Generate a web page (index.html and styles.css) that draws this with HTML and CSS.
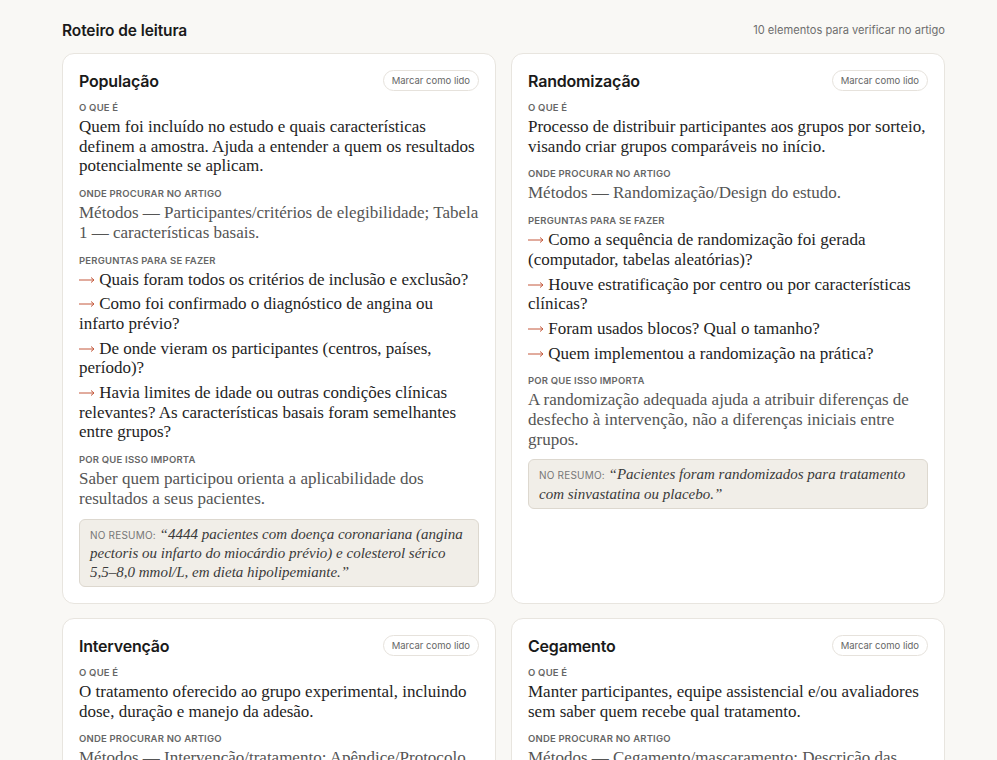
FILE: index.html
```html
<!DOCTYPE html>
<html lang="pt-BR">
<head>
  <meta charset="UTF-8">
  <title>Roteiro de leitura</title>
  <link rel="stylesheet" href="styles.css">
</head>
<body>
  <div class="page">
    <div class="page-header">
      <h2>Roteiro de leitura</h2>
      <span class="count">10 elementos para verificar no artigo</span>
    </div>

    <div class="cards">
      <div class="card">
        <div class="card-head">
          <h3>População</h3>
          <button class="mark-btn">Marcar como lido</button>
        </div>
        <div class="label">O que é</div>
        <p class="what">Quem foi incluído no estudo e quais características definem a amostra. Ajuda a entender a quem os resultados potencialmente se aplicam.</p>
        <div class="label">Onde procurar no artigo</div>
        <p class="where">Métodos — Participantes/critérios de elegibilidade; Tabela 1 — características basais.</p>
        <div class="label">Perguntas para se fazer</div>
        <ul class="questions">
          <li><svg class="arrow" width="16" height="8" viewBox="0 0 16 8"><path d="M0 4H15M12 1.5L15 4L12 6.5"/></svg> Quais foram todos os critérios de inclusão e exclusão?</li>
          <li><svg class="arrow" width="16" height="8" viewBox="0 0 16 8"><path d="M0 4H15M12 1.5L15 4L12 6.5"/></svg> Como foi confirmado o diagnóstico de angina ou infarto prévio?</li>
          <li><svg class="arrow" width="16" height="8" viewBox="0 0 16 8"><path d="M0 4H15M12 1.5L15 4L12 6.5"/></svg> De onde vieram os participantes (centros, países, período)?</li>
          <li><svg class="arrow" width="16" height="8" viewBox="0 0 16 8"><path d="M0 4H15M12 1.5L15 4L12 6.5"/></svg> Havia limites de idade ou outras condições clínicas relevantes? As características basais foram semelhantes entre grupos?</li>
        </ul>
        <div class="label">Por que isso importa</div>
        <p class="where">Saber quem participou orienta a aplicabilidade dos resultados a seus pacientes.</p>
        <div class="summary">
          <span class="summary-tag">No resumo:</span>
          <em>“4444 pacientes com doença coronariana (angina pectoris ou infarto do miocárdio prévio) e colesterol sérico 5,5–8,0 mmol/L, em dieta hipolipemiante.”</em>
        </div>
      </div>

      <div class="card">
        <div class="card-head">
          <h3>Randomização</h3>
          <button class="mark-btn">Marcar como lido</button>
        </div>
        <div class="label">O que é</div>
        <p class="what">Processo de distribuir participantes aos grupos por sorteio, visando criar grupos comparáveis no início.</p>
        <div class="label">Onde procurar no artigo</div>
        <p class="where">Métodos — Randomização/Design do estudo.</p>
        <div class="label">Perguntas para se fazer</div>
        <ul class="questions">
          <li><svg class="arrow" width="16" height="8" viewBox="0 0 16 8"><path d="M0 4H15M12 1.5L15 4L12 6.5"/></svg> Como a sequência de randomização foi gerada (computador, tabelas aleatórias)?</li>
          <li><svg class="arrow" width="16" height="8" viewBox="0 0 16 8"><path d="M0 4H15M12 1.5L15 4L12 6.5"/></svg> Houve estratificação por centro ou por características clínicas?</li>
          <li><svg class="arrow" width="16" height="8" viewBox="0 0 16 8"><path d="M0 4H15M12 1.5L15 4L12 6.5"/></svg> Foram usados blocos? Qual o tamanho?</li>
          <li><svg class="arrow" width="16" height="8" viewBox="0 0 16 8"><path d="M0 4H15M12 1.5L15 4L12 6.5"/></svg> Quem implementou a randomização na prática?</li>
        </ul>
        <div class="label">Por que isso importa</div>
        <p class="where">A randomização adequada ajuda a atribuir diferenças de desfecho à intervenção, não a diferenças iniciais entre grupos.</p>
        <div class="summary">
          <span class="summary-tag">No resumo:</span>
          <em>“Pacientes foram randomizados para tratamento com sinvastatina ou placebo.”</em>
        </div>
      </div>

      <div class="card">
        <div class="card-head">
          <h3>Intervenção</h3>
          <button class="mark-btn">Marcar como lido</button>
        </div>
        <div class="label">O que é</div>
        <p class="what">O tratamento oferecido ao grupo experimental, incluindo dose, duração e manejo da adesão.</p>
        <div class="label">Onde procurar no artigo</div>
        <p class="where">Métodos — Intervenção/tratamento; Apêndice/Protocolo suplementar.</p>
      </div>

      <div class="card">
        <div class="card-head">
          <h3>Cegamento</h3>
          <button class="mark-btn">Marcar como lido</button>
        </div>
        <div class="label">O que é</div>
        <p class="what">Manter participantes, equipe assistencial e/ou avaliadores sem saber quem recebe qual tratamento.</p>
        <div class="label">Onde procurar no artigo</div>
        <p class="where">Métodos — Cegamento/mascaramento; Descrição das cápsulas e do placebo.</p>
      </div>
    </div>
  </div>
</body>
</html>
```

FILE: styles.css
```css
* {
  box-sizing: border-box;
}

body {
  margin: 0;
  background: #f9f8f5;
  font-family: 'Inter', 'Liberation Sans', sans-serif;
  color: #1c1c1c;
}

.page {
  width: 883px;
  margin-left: 62px;
  padding-top: 19px;
}

.page-header {
  display: flex;
  align-items: center;
  justify-content: space-between;
  height: 22px;
  margin-bottom: 12px;
}

.page-header h2 {
  margin: 0;
  font-size: 15.5px;
  font-weight: 600;
  color: #1a1a1a;
  letter-spacing: -0.1px;
}

.count {
  font-size: 11.1px;
  color: #6e6e6e;
}

.cards {
  display: grid;
  grid-template-columns: 1fr 1fr;
  gap: 14px 15px;
}

.card {
  background: #fff;
  border: 1px solid #e8e5df;
  border-radius: 12px;
  padding: 16px 16px 16px;
}

.card-head {
  display: flex;
  align-items: center;
  justify-content: space-between;
  margin-bottom: 10px;
}

.card-head h3 {
  margin: 0;
  font-size: 16px;
  font-weight: 600;
  color: #1a1a1a;
  letter-spacing: -0.2px;
}

.mark-btn {
  font-family: 'Inter', 'Liberation Sans', sans-serif;
  font-size: 9.5px;
  color: #666;
  background: #fff;
  border: 1px solid #e6e2dc;
  border-radius: 11px;
  height: 21px;
  padding: 0 8px;
}

.label {
  font-size: 9.5px;
  font-weight: 600;
  text-transform: uppercase;
  letter-spacing: 0.2px;
  color: #666;
  line-height: 14px;
  margin-bottom: 2px;
}

.what,
.where,
.questions {
  font-family: 'Liberation Serif', serif;
  font-size: 17px;
  line-height: 19.7px;
  margin: 0 0 11px;
}

.what {
  color: #1e1e1e;
}

.where {
  color: #555;
}

.questions {
  list-style: none;
  padding: 0;
  color: #1e1e1e;
  display: flex;
  flex-direction: column;
  gap: 5px;
}

.arrow {
  fill: none;
  stroke: #c4593d;
  stroke-width: 1;
  vertical-align: 1px;
}

.summary {
  background: #f1eee8;
  border: 1px solid #ddd8cf;
  border-radius: 6px;
  padding: 5px 10px 5px;
  margin-top: -1px;
  font-family: 'Liberation Serif', serif;
  font-size: 15px;
  line-height: 18.5px;
  color: #3a3a3a;
}

.summary-tag {
  font-family: 'Inter', 'Liberation Sans', sans-serif;
  font-size: 10px;
  text-transform: uppercase;
  letter-spacing: 0.2px;
  color: #777;
}
```
